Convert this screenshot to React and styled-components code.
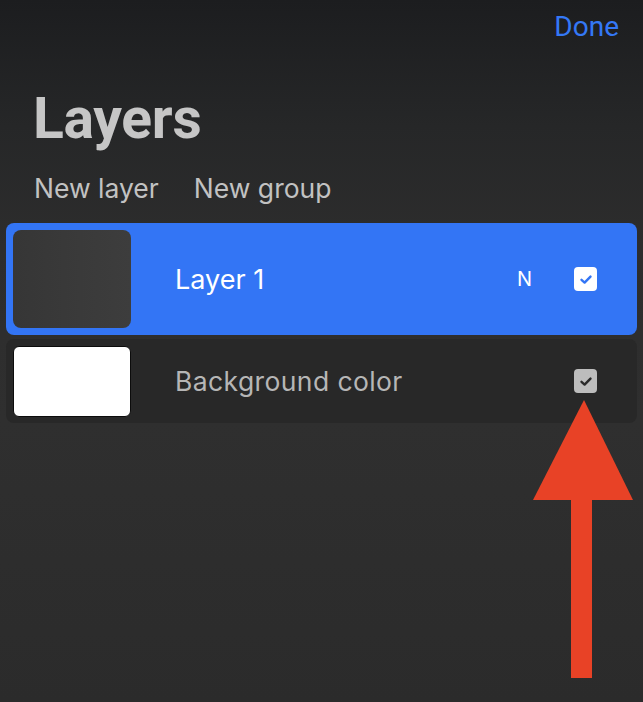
import React from 'react'
import styled, { createGlobalStyle } from 'styled-components'

const Global = createGlobalStyle`
  html, body {
    margin: 0;
    padding: 0;
    background: #2c2c2c;
  }
  body {
    font-family: Inter, Roboto, "Liberation Sans", sans-serif;
  }
`

const Screen = styled.div`
  position: relative;
  width: 643px;
  height: 702px;
  overflow: hidden;
  background: linear-gradient(180deg, #1c1d1f 0%, #262728 18%, #2d2d2d 35%, #2f2f2f 60%, #2b2b2b 100%);
  display: flex;
  flex-direction: column;
`

const TopBar = styled.div`
  display: flex;
  justify-content: flex-end;
  padding: 10px 24px 0 0;
  height: 40px;
`

const DoneButton = styled.span`
  font-family: Roboto, sans-serif;
  font-size: 28px;
  line-height: 34px;
  color: #3478f6;
`

const Title = styled.h1`
  margin: 37px 0 0 33px;
  font-family: Roboto, sans-serif;
  font-size: 57px;
  line-height: 64px;
  font-weight: 700;
  color: #c6c6c6;
  letter-spacing: -0.3px;
`

const Actions = styled.div`
  display: flex;
  gap: 35px;
  margin: 19px 0 0 34px;
  height: 36px;
  .action {
    font-size: 26.5px;
    line-height: 36px;
    color: #c2c2c2;
  }
`

const LayerList = styled.div`
  display: flex;
  flex-direction: column;
  gap: 4px;
  margin-top: 17px;
  padding: 0 6px;
`

const Row = styled.div`
  display: flex;
  align-items: center;
  height: ${p => p.$height}px;
  padding: 0 40px 0 7px;
  border-radius: 8px;
  background: ${p => (p.$selected ? '#3375f5' : '#282828')};
`

const Thumb = styled.div`
  width: 118px;
  height: ${p => p.$height}px;
  border-radius: ${p => (p.$white ? 6 : 8)}px;
  box-sizing: border-box;
  background: ${p => (p.$white ? '#ffffff' : 'linear-gradient(90deg, #363636, #3d3d3d)')};
  border: ${p => (p.$white ? '1.5px solid #0c0c0c' : 'none')};
  flex-shrink: 0;
`

const Label = styled.div`
  flex: 1;
  margin-left: 44px;
  font-size: ${p => (p.$selected ? 27 : 26.5)}px;
  letter-spacing: ${p => (p.$selected ? 0 : 0.4)}px;
  color: ${p => (p.$selected ? '#ffffff' : '#b6b6b6')};
`

const Blend = styled.span`
  font-size: 20px;
  color: #ffffff;
  margin-right: 42px;
`

const Check = styled.div`
  width: 23px;
  height: 24px;
  border-radius: 4px;
  background: ${p => (p.$selected ? '#ffffff' : '#bdbdbd')};
  display: flex;
  align-items: center;
  justify-content: center;
  svg path {
    stroke: ${p => (p.$selected ? '#3375f5' : '#2a2a2a')};
  }
`

const Arrow = styled.svg`
  position: absolute;
  left: 533px;
  top: 400px;
`

const CheckMark = () => (
  <svg width="14" height="11" viewBox="0 0 14 11">
    <path d="M2.5 5.8 L5.6 8.6 L11.5 2.6" fill="none" strokeWidth="2.4" strokeLinecap="round" strokeLinejoin="round" />
  </svg>
)

export default function App() {
  return (
    <>
      <Global />
      <Screen>
        <TopBar>
          <DoneButton>Done</DoneButton>
        </TopBar>
        <Title>Layers</Title>
        <Actions>
          <span className="action">New layer</span>
          <span className="action">New group</span>
        </Actions>
        <LayerList>
          <Row $selected $height={112}>
            <Thumb $height={98} />
            <Label $selected>Layer 1</Label>
            <Blend>N</Blend>
            <Check $selected>
              <CheckMark />
            </Check>
          </Row>
          <Row $height={84}>
            <Thumb $white $height={71} />
            <Label>Background color</Label>
            <Check>
              <CheckMark />
            </Check>
          </Row>
        </LayerList>
        <Arrow width="101" height="279" viewBox="0 0 101 279">
          <polygon points="51,0 100,100 0,100" fill="#e84226" />
          <rect x="38" y="99" width="21" height="179" fill="#e84226" />
        </Arrow>
      </Screen>
    </>
  )
}
